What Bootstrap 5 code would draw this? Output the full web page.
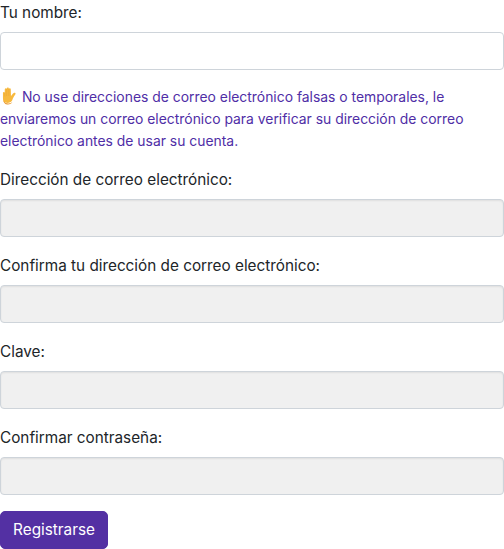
<!DOCTYPE html>
<html lang="es"><head><meta charset="utf-8">
<link href="https://cdn.jsdelivr.net/npm/bootstrap@5.3.0/dist/css/bootstrap.min.css" rel="stylesheet">
<style>
html,body{background:#fff;overflow:hidden}
body{font-family:"Inter","Liberation Sans",sans-serif;font-size:14.4px;color:#212529;margin:0}
.top-gap{height:1px}
.field-label{display:block;line-height:22px;font-size:15.3px;padding-top:1px;margin-bottom:8px}
.form-control.field-box{height:38px;border-color:#ced4da;border-radius:4px}
.form-control.field-box:disabled{background:#f0f0f0;box-shadow:inset 0 1px 2px rgba(0,0,0,.07)}
.notice-text{color:#4f2ea6;line-height:22px;font-size:13.9px;margin:16px 0 16px}
.hand{width:19px;height:19px;vertical-align:-4px;margin-left:0;margin-right:-1px}
.btn-signup{background:#5330a3;border-color:#5330a3;color:#fff;font-size:15.3px;height:38px;width:108px;padding:0;border-radius:5px}
.field-wrap{margin-bottom:17px}
.field-wrap.last-field{margin-bottom:16px}
</style></head><body>
<form>
<div class="top-gap"></div>
<label class="field-label">Tu nombre:</label>
<input class="form-control field-box" type="text">
<p class="notice-text"><svg class="hand" viewBox="0 0 18 18"><path fill="#f7b93e" d="M2.800 5.500c0-1.100 1.600-1.100 1.700 0 0-1.500 0-3 .1-3.500.2-1 1.600-1 1.700 0 .1-.8.2-1.300.9-1.500.7-.1 1.200.4 1.200 1.200.2-.8 1.700-.7 1.800.4l.2 6.600c.6-1.100 1.700-2.600 2.700-3.100 1-.5 2.100.3 1.500 1.200-.9 1.300-1.700 2.500-2.300 3.900-.5 1.400-1 2.800-2.100 3.600-1.400 1-4 1-5.300.1C3.100 14.800 2.800 12.600 2.800 10z"/><path fill="#e8962a" d="M3.100 12.500c.4 2.200 1.600 3.900 4.100 4.100 2 .1 3.800-.7 4.600-2.600-.9 1.200-2.300 1.700-4 1.600-2.300-.1-3.800-1.300-4.700-3.100z"/><path fill="none" stroke="#e8a030" stroke-width=".4" d="M4.500 5.500v3.500M6.300 2v6.500M8.400 2v6.500"/></svg> No use direcciones de correo electrónico falsas o temporales, le enviaremos un correo electrónico para verificar su dirección de correo electrónico antes de usar su cuenta.</p>
<div class="field-wrap"><label class="field-label">Dirección de correo electrónico:</label><input class="form-control field-box" disabled></div>
<div class="field-wrap"><label class="field-label">Confirma tu dirección de correo electrónico:</label><input class="form-control field-box" disabled></div>
<div class="field-wrap"><label class="field-label">Clave:</label><input class="form-control field-box" disabled></div>
<div class="field-wrap last-field"><label class="field-label">Confirmar contraseña:</label><input class="form-control field-box" disabled></div>
<button type="button" class="btn btn-signup">Registrarse</button>
</form>
<script src="https://cdn.jsdelivr.net/npm/bootstrap@5.3.0/dist/js/bootstrap.bundle.min.js"></script>
</body></html>
